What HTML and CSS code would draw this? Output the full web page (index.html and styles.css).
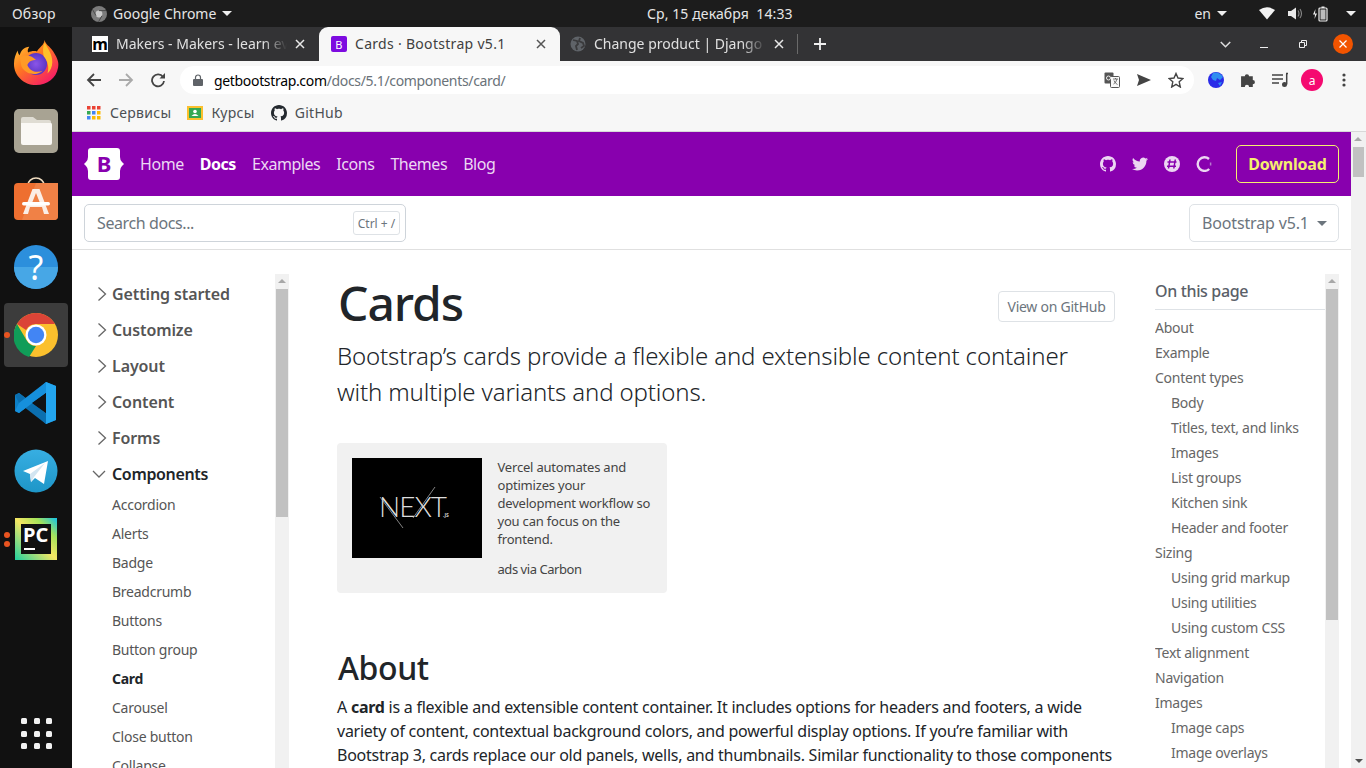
FILE: index.html
```html
<!DOCTYPE html>
<html lang="ru">
<head>
<meta charset="utf-8">
<title>Cards · Bootstrap v5.1</title>
<link rel="stylesheet" href="styles.css">
</head>
<body>
<header class="topbar">
  <span class="tb-overview">Обзор</span>
  <span class="tb-app">
    <svg class="tb-chrome" viewBox="0 0 16 16"><circle cx="8" cy="8" r="8" fill="#7b7b7b"/><circle cx="8" cy="8" r="3.4" fill="#c9c9c9"/><path d="M8 4.6h7M5 9.7 1.6 3.6M11 9.7 7.500 15.800" stroke="#4b4b4b" stroke-width="1"/></svg>
    Google Chrome <i class="caret"></i>
  </span>
  <span class="tb-date">Ср, 15 декабря&nbsp; 14:33</span>
  <span class="tb-right">
    <span class="tb-lang">en <i class="caret"></i></span>
    <svg class="tb-ic tb-wifi" viewBox="0 0 16 14"><path d="M0 3.500Q8-2 16 3.500L8 13Z" fill="#f2f2f2"/></svg>
    <svg class="tb-ic tb-sound" viewBox="0 0 16 14"><path d="M1 4.500h3L9 1v12L4 9.500H1Z" fill="#e8e8e8"/><path d="M11 4q2 3 0 6M13 2.500q3 4.500 0 9" fill="none" stroke="#888" stroke-width="1.100"/></svg>
    <svg class="tb-ic tb-batt" viewBox="0 0 16 16"><path d="M3.500 3 1 8.500h2L2.500 13 5 7.500H3Z" fill="#eee"/><rect x="7" y="2" width="8" height="13" rx="1" fill="none" stroke="#eee" stroke-width="1.200"/><rect x="9.500" y=".5" width="3" height="1.500" fill="#eee"/><rect x="8.500" y="3.500" width="5" height="10" fill="#bbb"/></svg>
    <i class="caret"></i>
  </span>
</header>
<div class="desktop">
  <nav class="dock">
    <div class="dock-item">
      <svg viewBox="0 0 48 48" class="app app-ff"><defs><linearGradient id="ff1" x1="0" y1="0" x2=".8" y2="1"><stop offset="0" stop-color="#ffd43a"/><stop offset=".45" stop-color="#ff7a1f"/><stop offset="1" stop-color="#f5156c"/></linearGradient><radialGradient id="ff2"><stop offset="0" stop-color="#8a55e8"/><stop offset="1" stop-color="#5b35c4"/></radialGradient></defs><path d="M33 1c1 5 5 6 9 12 5 8 6 12 5 17-2 11-11 18-23 18C11 48 1 38 1 26 1 20 3 15 5 12c0 3 1 4 2 5 1-5 5-9 10-9-2 3-2 5-1 6 2-1 6-2 9-1 3-5 7-6 8-12Z" fill="url(#ff1)"/><circle cx="24" cy="26" r="11.500" fill="url(#ff2)"/><path d="M7 19c6-3 12-2 17 3-4 0-7 1-9 5 2 6 9 9 16 6-7 6-18 4-22-4-1-3-1-7-2-10Z" fill="#ff9a26"/><path d="M33 4c4 7 8 12 8 20 0 5-2 9-5 12 2-7 0-13-4-18-1-5-1-10 1-14Z" fill="#ffbf2b"/></svg>
    </div>
    <div class="dock-item">
      <svg viewBox="0 0 44 44" class="app"><rect width="44" height="44" rx="5" fill="#a8a393"/><path d="M7 10q0-2 2-2h10l4 3h12q2 0 2 2v2H7Z" fill="#dfdcd3"/><path d="M7 14h30q1 0 1 1.500V34q0 2-2 2H9q-2 0-2-2Z" fill="#faf8f5"/></svg>
    </div>
    <div class="dock-item">
      <svg viewBox="0 0 44 44" class="app"><path d="M14 8a8 7 0 0 1 16 0" fill="none" stroke="#f0dcc0" stroke-width="1.600"/><rect y="6" width="44" height="37" rx="4" fill="#ee6f30"/><path d="M22 6h22v33q0 4-4 4H8Z" fill="#f08146"/><path d="M18.500 12h7L35 37h-5l-2-7H16l-2 7H9ZM22 16l-4 10h8Z" fill="#fbeee6"/><rect x="8" y="25" width="28" height="3.500" rx="1.700" fill="#fff"/></svg>
    </div>
    <div class="dock-item">
      <svg viewBox="0 0 44 44" class="app"><circle cx="22" cy="22" r="22" fill="#2c8fdc"/><path d="M0 22h44a22 22 0 0 1-44 0Z" fill="#47a7e6"/><text x="22" y="35" class="help-q">?</text></svg>
    </div>
    <div class="dock-item is-active">
      <svg viewBox="0 0 44 44" class="app"><circle cx="22" cy="22" r="22" fill="#fbc02d"/><path d="M3 11A22 22 0 0 1 41 11H22a11 11 0 0 0-10 6Z" fill="#db4437"/><path d="M3 11l10 17a11 11 0 0 0 9 5L15 44A22 22 0 0 1 3 11Z" fill="#109d58"/><circle cx="22" cy="22" r="10.500" fill="#fff"/><circle cx="22" cy="22" r="8.200" fill="#4285f4"/></svg>
      <i class="run-dot"></i>
    </div>
    <div class="dock-item">
      <svg viewBox="0 0 44 44" class="app"><path d="M32 1 14 19 5 12 1 14v16l4 2 9-7 18 18 10-4V5Z" fill="#0d7fc6"/><path d="M32 1l10 4v34l-10 4Z" fill="#23a6f0"/><path d="M32 12v20L18 22Z" fill="#0a0a0e"/><path d="M1 14l4-2 27 20v11L5 22Z" fill="#0b6fb0"/><path d="M1 30l4 2 27-20V1L5 22Z" fill="#1690dc"/><path d="M32 12v20L18 22Z" fill="#121214"/></svg>
    </div>
    <div class="dock-item">
      <svg viewBox="0 0 44 44" class="app"><defs><linearGradient id="tg" x1="0" y1="0" x2="0" y2="1"><stop offset="0" stop-color="#37aee2"/><stop offset="1" stop-color="#1e96c8"/></linearGradient></defs><circle cx="22" cy="22" r="21.500" fill="url(#tg)"/><path d="M9 22 34 12l-4 23-9-6-4 4-1-8Z" fill="#fff"/><path d="M16 25l15-11-11 14-3 5Z" fill="#d2e5f1"/></svg>
    </div>
    <div class="dock-item">
      <svg viewBox="0 0 42 42" class="app app-pc"><defs><linearGradient id="pc" x1="0" y1="1" x2="1" y2="0"><stop offset="0" stop-color="#1dd1a1"/><stop offset=".5" stop-color="#f5e663"/><stop offset=".75" stop-color="#a5e35a"/><stop offset="1" stop-color="#12c2e9"/></linearGradient></defs><rect width="42" height="42" fill="url(#pc)"/><rect x="6" y="6" width="30" height="30" fill="#111"/><text x="8" y="24" class="pc-text">PC</text><rect x="9" y="30" width="11" height="2" fill="#fff"/></svg>
      <i class="run-dot dot-a"></i><i class="run-dot dot-b"></i>
    </div>
    <div class="apps-grid"><i></i><i></i><i></i><i></i><i></i><i></i><i></i><i></i><i></i></div>
  </nav>

  <div class="browser">
    <div class="tabstrip">
      <div class="tab tab-dim">
        <span class="fav fav-m">m</span><span class="tab-title">Makers - Makers - learn everything</span>
        <svg class="tab-x" viewBox="0 0 10 10"><path d="M1 1l8 8M9 1 1 9" stroke="#e8e8e8" stroke-width="1.500"/></svg>
      </div>
      <div class="tab tab-active">
        <span class="fav fav-b">B</span><span class="tab-title">Cards · Bootstrap v5.1</span>
        <svg class="tab-x" viewBox="0 0 10 10"><path d="M1 1l8 8M9 1 1 9" stroke="#555" stroke-width="1.500"/></svg>
      </div>
      <div class="tab tab-dim tab-last">
        <svg class="fav" viewBox="0 0 16 16"><circle cx="8" cy="8" r="7.500" fill="#5f6368"/><path d="M3 4l4 1 1 3-2 2 1 4M10 2l-1 3 4 2 1 3-3 2" fill="none" stroke="#3a3a3c" stroke-width="1.800"/></svg>
        <span class="tab-title">Change product | Django site admin</span>
        <svg class="tab-x" viewBox="0 0 10 10"><path d="M1 1l8 8M9 1 1 9" stroke="#e8e8e8" stroke-width="1.500"/></svg>
      </div>
      <i class="tab-sep"></i>
      <svg class="tab-plus" viewBox="0 0 12 12"><path d="M6 0v12M0 6h12" stroke="#f0f0f0" stroke-width="1.800"/></svg>
      <div class="win-ctl">
        <svg class="wc-chev" viewBox="0 0 10 6"><path d="M.7.7 5 5 9.300.7" fill="none" stroke="#ddd" stroke-width="1.400"/></svg>
        <svg class="wc-min" viewBox="0 0 8 8"><path d="M0 7.500h8" stroke="#eee" stroke-width="1"/></svg>
        <svg class="wc-max" viewBox="0 0 8 8"><path d="M.5 2.500h5v5h-5ZM2.500 2V.5h5v5H6" fill="none" stroke="#eee"/></svg>
        <span class="wc-close"><svg viewBox="0 0 8 8"><path d="M.5.5l7 7M7.500.5l-7 7" stroke="#fff" stroke-width="1.200"/></svg></span>
      </div>
    </div>

    <div class="toolbar">
      <svg class="tool" viewBox="0 0 16 16"><path d="M15 8H2M8 2 2 8l6 6" fill="none" stroke="#444" stroke-width="1.800"/></svg>
      <svg class="tool" viewBox="0 0 16 16"><path d="M1 8h13M8 2l6 6-6 6" fill="none" stroke="#aaa" stroke-width="1.800"/></svg>
      <svg class="tool" viewBox="0 0 16 16"><path d="M13 5a6 6 0 1 0 1 4" fill="none" stroke="#444" stroke-width="1.800"/><path d="M15 1v5.500H9.500Z" fill="#444"/></svg>
      <div class="omnibox">
        <svg class="lock" viewBox="0 0 10 12"><path d="M2.500 5V3.500a2.500 2.500 0 0 1 5 0V5" fill="none" stroke="#5f6368" stroke-width="1.200"/><rect y="5" width="10" height="7" rx="1" fill="#5f6368"/></svg>
        <span class="url"><b>getbootstrap.com</b>/docs/5.1/components/card/</span>
        <svg class="omni-ic omni-tr" viewBox="0 0 16 16"><rect x=".5" y=".5" width="9" height="11" rx="1" fill="#555"/><rect x="6.500" y="4.500" width="9" height="11" rx="1" fill="#f8f8f8" stroke="#555"/><path d="M9 7h5M11.500 6v1M13 7q-1 4-3.500 5M10 8.500q1 3 3.500 4" fill="none" stroke="#555" stroke-width=".8"/><circle cx="4.500" cy="6" r="2" fill="none" stroke="#eee"/></svg>
        <svg class="omni-ic omni-send" viewBox="0 0 16 14"><path d="M1 1l14 6-14 6 2-6Z" fill="#444"/></svg>
        <svg class="omni-ic omni-star" viewBox="0 0 16 16"><path d="M8 1.500 10 6l5 .5-3.800 3.300L12.300 15 8 12.300 3.700 15l1.100-5.200L1 6.500 6 6Z" fill="none" stroke="#444" stroke-width="1.400"/></svg>
      </div>
      <div class="ext">
        <svg class="ext-ic ext-globe" viewBox="0 0 16 16"><circle cx="8" cy="8" r="8" fill="#2a2be8"/><path d="M5 1q6-2 10 4l-3 3-3-2-1 3-3-1-2-3ZM10 11l4-1-2 4Z" fill="#2f8df0"/></svg>
        <svg class="ext-ic" viewBox="0 1 15 15"><path d="M1 5h3.500a2 2 0 1 1 4 0H12v3.500a2 2 0 1 1 0 4V15H8.500a2 2 0 1 0-4 0H1Z" fill="#444"/></svg>
        <svg class="ext-ic" viewBox="0 0 16 16"><path d="M0 3h11M0 7h11M0 11h7" stroke="#444" stroke-width="1.500"/><path d="M14.700 1.500v11" stroke="#444" stroke-width="1.500"/><path d="M14 1.500h2" stroke="#444" stroke-width="1.500"/><circle cx="12.500" cy="12.500" r="2.500" fill="#444"/></svg>
        <span class="avatar">a</span>
        <svg class="ext-menu" viewBox="0 0 4 14"><circle cx="2" cy="2" r="1.600" fill="#444"/><circle cx="2" cy="7" r="1.600" fill="#444"/><circle cx="2" cy="12" r="1.600" fill="#444"/></svg>
      </div>
    </div>

    <div class="bookmarks">
      <span class="bm">
        <svg class="bm-ic" viewBox="0 0 14 14"><g><rect width="3.500" height="3.500" fill="#ea4335"/><rect x="5" width="3.500" height="3.500" fill="#ea4335"/><rect x="10" width="3.500" height="3.500" fill="#ea4335"/><rect y="5" width="3.500" height="3.500" fill="#34a853"/><rect x="5" y="5" width="3.500" height="3.500" fill="#4285f4"/><rect x="10" y="5" width="3.500" height="3.500" fill="#fbbc04"/><rect y="10" width="3.500" height="3.500" fill="#4285f4"/><rect x="5" y="10" width="3.500" height="3.500" fill="#fbbc04"/><rect x="10" y="10" width="3.500" height="3.500" fill="#fbbc04"/></g></svg>
        Сервисы
      </span>
      <span class="bm">
        <svg class="bm-ic bm-c" viewBox="0 0 16 14"><rect width="16" height="14" fill="#fbc02d"/><rect x="2" y="2" width="12" height="10" fill="#34a853"/><circle cx="8" cy="5.500" r="1.800" fill="#fff"/><path d="M4.500 10q3.500-4 7 0Z" fill="#fff"/></svg>
        Курсы
      </span>
      <span class="bm">
        <svg class="bm-ic bm-g" viewBox="0 0 16 16"><path fill="#24292f" d="M8 0C3.580 0 0 3.580 0 8c0 3.540 2.290 6.530 5.470 7.590.4.070.55-.17.550-.38 0-.19-.01-.82-.01-1.490-2.010.37-2.530-.49-2.690-.94-.09-.23-.48-.94-.82-1.130-.28-.15-.68-.52-.01-.53.630-.01 1.080.58 1.230.82.720 1.210 1.870.87 2.330.66.070-.52.280-.87.510-1.070-1.780-.2-3.640-.89-3.640-3.950 0-.87.310-1.590.820-2.150-.08-.2-.36-1.020.08-2.120 0 0 .67-.21 2.200.820.640-.18 1.320-.27 2-.27s1.360.09 2 .27c1.530-1.040 2.200-.82 2.200-.82.440 1.100.16 1.920.08 2.120.51.560.82 1.270.82 2.150 0 3.070-1.870 3.750-3.650 3.950.29.25.54.730.54 1.480 0 1.070-.01 1.930-.01 2.200 0 .21.150.46.550.38A8.010 8.010 0 0 0 16 8c0-4.420-3.580-8-8-8Z"/></svg>
        GitHub
      </span>
    </div>

    <div class="page">
      <div class="page-body">
        <header class="bd-nav">
          <svg class="bd-logo" viewBox="0 0 40 32"><path d="M4 3q0-3 3-3h26q3 0 3 3v6q0 3 2 5l2 2-2 2q-2 2-2 5v6q0 3-3 3H7q-3 0-3-3v-6q0-3-2-5l-2-2 2-2q2-2 2-5Z" fill="#fff"/><text x="20" y="24" class="bd-b">B</text></svg>
          <a class="bd-link">Home</a>
          <a class="bd-link bd-current">Docs</a>
          <a class="bd-link">Examples</a>
          <a class="bd-link">Icons</a>
          <a class="bd-link">Themes</a>
          <a class="bd-link">Blog</a>
          <span class="bd-icons">
            <svg class="bd-ic" viewBox="0 0 16 16"><path fill="#ecd6f2" d="M8 0C3.580 0 0 3.580 0 8c0 3.540 2.290 6.530 5.470 7.590.4.070.55-.17.550-.38 0-.19-.01-.82-.01-1.490-2.010.37-2.530-.49-2.690-.94-.09-.23-.48-.94-.82-1.130-.28-.15-.68-.52-.01-.53.630-.01 1.080.58 1.230.82.720 1.210 1.870.87 2.330.66.070-.52.280-.87.510-1.070-1.780-.2-3.640-.89-3.640-3.950 0-.87.310-1.590.820-2.150-.08-.2-.36-1.020.08-2.120 0 0 .67-.21 2.200.820.640-.18 1.320-.27 2-.27s1.360.09 2 .27c1.530-1.040 2.200-.82 2.200-.82.440 1.100.16 1.920.08 2.120.51.560.82 1.270.82 2.150 0 3.070-1.870 3.750-3.650 3.950.29.25.54.730.54 1.480 0 1.070-.01 1.930-.01 2.200 0 .21.150.46.550.38A8.010 8.010 0 0 0 16 8c0-4.420-3.580-8-8-8Z"/></svg>
            <svg class="bd-ic" viewBox="0 0 16 16"><path fill="#ecd6f2" d="M5.030 14.500c6.040 0 9.340-5 9.340-9.340 0-.14 0-.28-.01-.42A6.700 6.700 0 0 0 16 3.040a6.560 6.560 0 0 1-1.890.52 3.300 3.300 0 0 0 1.450-1.820 6.570 6.570 0 0 1-2.080.8A3.280 3.280 0 0 0 7.890 5.530 9.320 9.320 0 0 1 1.120 2.100a3.280 3.280 0 0 0 1.020 4.380 3.260 3.260 0 0 1-1.490-.41v.04a3.280 3.280 0 0 0 2.630 3.220 3.280 3.280 0 0 1-1.480.06 3.290 3.290 0 0 0 3.070 2.280A6.590 6.590 0 0 1 0 13.030a9.290 9.290 0 0 0 5.030 1.470Z"/></svg>
            <svg class="bd-ic" viewBox="0 0 16 16"><circle cx="8" cy="8" r="8" fill="#ecd6f2"/><path d="M6 3.500l-1.500 9M11.300 3.500l-1.500 9M3.500 6h9M3 10.200h9" stroke="#8800ae" stroke-width="1.500"/></svg>
            <svg class="bd-ic" viewBox="0 0 16 16"><path d="M13 3A6.800 6.800 0 1 0 13.200 13" fill="none" stroke="#ecd6f2" stroke-width="2.400"/><path d="M14.600 6.500v3" stroke="#b77ad0" stroke-width="1.500"/></svg>
          </span>
          <a class="bd-download">Download</a>
        </header>

        <div class="subnav">
          <div class="search">
            <span class="search-ph">Search docs...</span>
            <kbd class="search-kbd">Ctrl + /</kbd>
          </div>
          <div class="version">Bootstrap v5.1 <i class="ver-caret"></i></div>
        </div>

        <div class="layout">
          <aside class="side">
            <div class="scroller side-scroll">
              <ul class="side-list">
                <li class="sec"><svg class="chev" viewBox="0 0 10 16"><path d="M1.500 1.500 8.500 8l-7 6.500" /></svg>Getting started</li>
                <li class="sec"><svg class="chev" viewBox="0 0 10 16"><path d="M1.500 1.500 8.500 8l-7 6.500" /></svg>Customize</li>
                <li class="sec"><svg class="chev" viewBox="0 0 10 16"><path d="M1.500 1.500 8.500 8l-7 6.500" /></svg>Layout</li>
                <li class="sec"><svg class="chev" viewBox="0 0 10 16"><path d="M1.500 1.500 8.500 8l-7 6.500" /></svg>Content</li>
                <li class="sec"><svg class="chev" viewBox="0 0 10 16"><path d="M1.500 1.500 8.500 8l-7 6.500" /></svg>Forms</li>
                <li class="sec sec-open"><svg class="chev chev-open" viewBox="0 0 14 10"><path d="M1 2l6 6 6-6" /></svg>Components</li>
                <li class="sub">Accordion</li>
                <li class="sub">Alerts</li>
                <li class="sub">Badge</li>
                <li class="sub">Breadcrumb</li>
                <li class="sub">Buttons</li>
                <li class="sub">Button group</li>
                <li class="sub sub-current">Card</li>
                <li class="sub">Carousel</li>
                <li class="sub">Close button</li>
                <li class="sub">Collapse</li>
              </ul>
            </div>
            <div class="sbar sbar-side"><i class="sbar-up"></i><i class="thumb"></i></div>
          </aside>

          <main class="content">
            <div class="title-row">
              <h1 class="title">Cards</h1>
              <a class="gh-btn">View on GitHub</a>
            </div>
            <p class="lead">Bootstrap’s cards provide a flexible and extensible content container with multiple variants and options.</p>
            <div class="ad">
              <svg class="ad-img" viewBox="0 0 130 100">
                <rect width="130" height="100" fill="#000"/>
                <text x="27" y="59" class="next">NEXT</text>
                <text x="91" y="59" class="nextjs">.JS</text>
                <path d="M28 39 51 70M83 29 61 60" stroke="#bbb" stroke-width=".7"/>
              </svg>
              <div class="ad-text">
                <p class="ad-copy">Vercel automates and optimizes your development workflow so you can focus on the frontend.</p>
                <p class="ad-via">ads via Carbon</p>
              </div>
            </div>
            <h2 class="about">About</h2>
            <p class="para">A <b>card</b> is a flexible and extensible content container. It includes options for headers and footers, a wide variety of content, contextual background colors, and powerful display options. If you’re familiar with Bootstrap 3, cards replace our old panels, wells, and thumbnails. Similar functionality to those components is available as modifier classes for cards.</p>
          </main>

          <aside class="toc">
            <div class="scroller">
              <div class="toc-head">On this page</div>
              <ul class="toc-list">
                <li>About</li><li>Example</li><li>Content types</li>
                <li class="nested">Body</li><li class="nested">Titles, text, and links</li><li class="nested">Images</li><li class="nested">List groups</li><li class="nested">Kitchen sink</li><li class="nested">Header and footer</li>
                <li>Sizing</li>
                <li class="nested">Using grid markup</li><li class="nested">Using utilities</li><li class="nested">Using custom CSS</li>
                <li>Text alignment</li><li>Navigation</li><li>Images</li>
                <li class="nested">Image caps</li><li class="nested">Image overlays</li>
              </ul>
            </div>
            <div class="sbar sbar-toc"><i class="sbar-up"></i><i class="thumb"></i></div>
          </aside>
        </div>
      </div>
      <div class="sbar sbar-page"><i class="sbar-up"></i><i class="thumb"></i><i class="sbar-down"></i></div>
    </div>
  </div>
</div>
</body>
</html>
```

FILE: styles.css
```css
* { box-sizing: border-box; }
html, body { margin: 0; height: 768px; overflow: hidden; }
body { font-family: "Noto Sans", "Open Sans", sans-serif; font-size: 16px; color: #212529; background: #fff; }
ul { list-style: none; margin: 0; padding: 0; }
p, h1, h2 { margin: 0; }
svg { display: block; flex: none; }

/* top bar */
.topbar { height: 27px; background: #1c1c1c; color: #e6e6e6; display: flex; align-items: center; font-size: 14px; position: relative; }
.tb-overview { margin-left: 12px; width: 79px; letter-spacing: .2px; }
.tb-app { display: flex; align-items: center; }
.tb-chrome { width: 16px; height: 16px; margin-right: 6px; }
.caret { display: inline-block; width: 0; height: 0; border: 5px solid transparent; border-top: 5px solid #eee; border-bottom: 0; margin-left: 6px; }
.tb-date { position: absolute; left: 647px; top: 4px; letter-spacing: .1px; }
.tb-right { margin-left: auto; display: flex; align-items: center; padding-right: 10px; }
.tb-lang { display: flex; align-items: center; margin-right: 32px; }
.tb-ic { width: 16px; height: 15px; }
.tb-wifi { margin-right: 12px; }
.tb-sound { margin-right: 9px; }
.tb-batt { margin-right: 12px; height: 16px; }

.desktop { display: flex; height: 741px; }

/* dock */
.dock { width: 72px; flex: none; background: #111; display: flex; flex-direction: column; padding-top: 2px; height: 741px; }
.dock-item { height: 68px; flex: none; display: flex; align-items: center; justify-content: center; position: relative; }
.app { width: 44px; height: 44px; }
.app-ff { width: 46px; height: 46px; margin-bottom: 3px; }
.app-pc { width: 42px; height: 42px; }
.is-active::before { content: ""; position: absolute; left: 4px; right: 4px; top: 2px; bottom: 2px; border-radius: 4px; background: #3c3c3c; }
.is-active .app { position: relative; }
.run-dot { position: absolute; left: 4px; top: 31px; width: 6px; height: 6px; border-radius: 50%; background: #e95420; }
.dot-a { top: 27px; }
.dot-b { top: 36px; }
.help-q { font: 400 34px "Noto Sans", sans-serif; fill: #fff; text-anchor: middle; }
.pc-text { font: 700 20px "Noto Sans", sans-serif; fill: #fff; }
.apps-grid { margin: auto 0 19px 21px; width: 31px; display: grid; grid-template-columns: repeat(3, 6px); gap: 6.500px; }
.apps-grid i { width: 6px; height: 6px; border-radius: 1.500px; background: #f2f2f2; }

/* browser */
.browser { flex: 1; min-width: 0; display: flex; flex-direction: column; }
.tabstrip { height: 34px; flex: none; background: #333335; display: flex; align-items: center; position: relative; }
.tab { height: 34px; width: 247px; display: flex; align-items: center; padding: 0 14px 0 20px; color: #e0e0e0; font-size: 14px; }
.tab-active { background: #f7f7f7; color: #404040; width: 241px; padding-left: 12px; border-radius: 9px 9px 0 0; letter-spacing: .3px; }
.tab-last { width: 238px; padding-left: 10px; }
.fav { width: 16px; height: 16px; margin-right: 8px; flex: none; display: flex; align-items: center; justify-content: center; }
.fav-m { background: #fff; color: #000; font: 700 16px/16px "Noto Sans", sans-serif; }
.fav-b { background: #7d0be0; color: #fff; font-size: 11px; border-radius: 2px; }
.tab-title { flex: 1; min-width: 0; white-space: nowrap; overflow: hidden; padding-bottom: 2px; -webkit-mask-image: linear-gradient(to left, transparent 0, #000 24px); mask-image: linear-gradient(to left, transparent 0, #000 24px); }
.tab-active .tab-title { -webkit-mask-image: none; mask-image: none; }
.tab-x { width: 10px; height: 10px; margin-left: 8px; }
.tab-sep { width: 1px; height: 20px; background: #6a6a6a; margin-left: -1px; }
.tab-plus { width: 12px; height: 12px; margin-left: 16px; }
.win-ctl { margin-left: auto; display: flex; align-items: center; padding-right: 13px; }
.wc-chev { width: 11px; height: 7px; margin-right: 29px; }
.wc-min { width: 8px; height: 8px; margin-right: 31px; }
.wc-max { width: 8px; height: 8px; margin-right: 26px; }
.wc-close { width: 20px; height: 20px; border-radius: 50%; background: #f25400; display: flex; align-items: center; justify-content: center; }
.wc-close svg { width: 8px; height: 8px; }

.toolbar { height: 33px; flex: none; background: #f7f7f7; display: flex; align-items: flex-end; padding-left: 14px; }
.tool { width: 16px; height: 16px; margin: 0 16px 6px 0; }
.omnibox { width: 1014px; height: 28px; margin-left: -2px; background: #fff; border-radius: 14px; display: flex; align-items: center; padding-left: 13px; flex: none; }
.lock { width: 10px; height: 12px; margin-right: 11px; }
.url { flex: 1; color: #6a7279; font-size: 14px; white-space: nowrap; letter-spacing: -.33px; }
.url b { color: #000; font-weight: 400; }
.omni-ic { width: 16px; height: 16px; }
.omni-tr { margin-right: 16px; }
.omni-send { margin-right: 16px; height: 14px; }
.omni-star { margin-right: 10px; }
.ext { display: flex; align-items: center; height: 28px; margin-left: 14px; }
.ext-ic { width: 16px; height: 16px; margin-right: 16px; }
.avatar { width: 22px; height: 22px; border-radius: 50%; background: #f50a70; color: #fff; font-size: 12px; display: flex; align-items: center; justify-content: center; margin: 0 0 0 -3px; }
.ext-menu { width: 4px; height: 14px; margin-left: 19px; }

.bookmarks { height: 38px; flex: none; background: #f7f7f7; display: flex; align-items: center; padding-left: 15px; gap: 16px; font-size: 14px; color: #4b4f53; border-bottom: 1px solid #d8d8d8; letter-spacing: .3px; }
.bm { display: flex; align-items: center; }
.bm-ic { width: 14px; height: 14px; margin-right: 9px; }
.bm-c { width: 16px; height: 14px; margin-right: 8px; }
.bm-g { width: 16px; height: 16px; margin-right: 8px; }

/* page */
.page { flex: 1; min-height: 0; display: flex; }
.page-body { flex: 1; min-width: 0; display: flex; flex-direction: column; }
.bd-nav { height: 64px; flex: none; background: #8800ae; display: flex; align-items: center; padding: 0 12px 0 12px; font-size: 16px; }
.bd-logo { width: 40px; height: 32px; margin-right: 16px; }
.bd-b { font: 700 22px "Noto Sans", sans-serif; fill: #8800ae; text-anchor: middle; }
.bd-link { color: #ecd8f3; margin-right: 16px; letter-spacing: -.45px; }
.bd-current { color: #fff; font-weight: 700; }
.bd-icons { margin-left: auto; display: flex; gap: 16px; margin-right: 24px; }
.bd-ic { width: 16px; height: 16px; }
.bd-download { width: 103px; height: 38px; border: 1px solid #f5f06e; border-radius: 5px; color: #f5f06e; font-weight: 700; letter-spacing: -.2px; display: flex; align-items: center; justify-content: center; }

.subnav { height: 54px; flex: none; border-bottom: 1px solid #e0e0e0; display: flex; align-items: flex-start; justify-content: space-between; padding: 8px 12px; }
.search { width: 322px; height: 38px; border: 1px solid #ced4da; border-radius: 5px; display: flex; align-items: center; justify-content: space-between; padding: 0 5px 0 12px; }
.search-ph { color: #6c757d; letter-spacing: -.4px; }
.search-kbd { width: 47px; height: 24px; border: 1px solid #dee2e6; border-radius: 3px; font: 12px "Noto Sans", sans-serif; color: #6c757d; display: flex; align-items: center; justify-content: center; }
.version { width: 150px; height: 38px; border: 1px solid #dee2e6; border-radius: 5px; color: #6c757d; display: flex; align-items: center; padding-left: 12px; white-space: nowrap; letter-spacing: -.15px; }
.ver-caret { width: 0; height: 0; border: 5px solid transparent; border-top: 5px solid #6c757d; border-bottom: 0; margin-left: 8px; }

.layout { flex: 1; min-height: 0; display: grid; grid-template-columns: 217px 826px 236px; padding-top: 24px; overflow: hidden; }
.side { display: flex; min-height: 0; }
.scroller { flex: 1; min-width: 0; overflow: hidden; }
.side-list { padding: 2px 0 0 25px; }
.sec { height: 36px; display: flex; align-items: center; font-weight: 600; color: #555; position: relative; white-space: nowrap; padding-left: 15px; line-height: 22px; letter-spacing: -.1px; }
.sec-open { color: #212529; margin-bottom: -2px; letter-spacing: -.35px; }
.chev { position: absolute; left: 0; top: 10px; width: 10px; height: 16px; fill: none; stroke: #666; stroke-width: 1.300; }
.chev-open { left: -5px; top: 13px; width: 14px; height: 10px; }
.sub { height: 29px; display: flex; align-items: center; padding-left: 15px; font-size: 14px; color: #555; white-space: nowrap; letter-spacing: -.25px; }
.sub-current { color: #212529; font-weight: 700; }

.sbar { width: 14px; flex: none; background: #f1f1f1; position: relative; }
.sbar .thumb { position: absolute; left: 1px; right: 1px; top: 15px; background: #c1c1c1; }
.sbar-up { position: absolute; left: 3px; top: 5px; width: 0; height: 0; border: 4px solid transparent; border-bottom: 4px solid #a8a8a8; border-top: 0; }
.sbar-down { position: absolute; left: 4px; bottom: 5px; width: 0; height: 0; border: 4px solid transparent; border-top: 4px solid #505050; border-bottom: 0; }
.sbar-side .thumb { height: 228px; }
.sbar-toc .thumb { height: 331px; }
.sbar-page { width: 15px; }
.sbar-page .thumb { left: 2px; right: 2px; height: 30px; }

.content { padding: 0 0 0 48px; min-width: 0; }
.title-row { display: flex; align-items: flex-start; justify-content: space-between; }
.title { font-size: 48px; line-height: 58px; font-weight: 500; padding-left: 1px; letter-spacing: -1.1px; }
.gh-btn { margin-top: 17px; width: 117px; height: 31px; border: 1px solid #dee2e6; border-radius: 4px; font-size: 14px; color: #6c757d; letter-spacing: -.25px; display: flex; align-items: center; justify-content: center; }
.lead { font-size: 24px; line-height: 36px; font-weight: 300; margin-top: 6px; padding: 0 20px 0 0; letter-spacing: -.14px; }
.ad { width: 330px; height: 150px; margin-top: 33px; background: #f1f1f1; border-radius: 4px; padding: 15px; display: flex; gap: 15.5px; }
.ad-img { width: 130px; height: 100px; }
.next { font: 300 28px "Lato", sans-serif; fill: #ddd; letter-spacing: -1px; }
.nextjs { font: 700 5px "Noto Sans", sans-serif; fill: #ccc; }
.ad-text { flex: 1; min-width: 0; font-size: 13px; line-height: 18px; color: #444; letter-spacing: -.2px; }
.ad-via { margin-top: 12px; letter-spacing: -.45px; }
.about { font-size: 32px; line-height: 38px; font-weight: 500; margin-top: 56px; padding-left: 1px; letter-spacing: -.4px; }
.para { margin-top: 8px; line-height: 24px; letter-spacing: -.25px; }

.toc { display: flex; min-height: 0; padding: 0 12px 0 40px; }
.toc-head { height: 36px; padding-bottom: 2px; border-bottom: 1px solid #dee2e6; font-weight: 500; color: #5a6068; letter-spacing: -.35px; display: flex; align-items: center; }
.toc-list { padding-top: 6px; font-size: 14px; color: #666; letter-spacing: -.25px; }
.toc-list li { height: 25px; display: flex; align-items: center; white-space: nowrap; padding-bottom: 2px; }
.toc-list .nested { padding-left: 16px; }
```
